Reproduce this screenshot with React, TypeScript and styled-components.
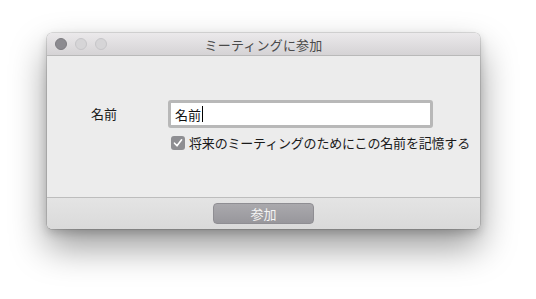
import React from 'react'
import styled, { createGlobalStyle } from 'styled-components'

const GlobalStyle = createGlobalStyle`
  html, body {
    margin: 0;
    padding: 0;
    background: #ffffff;
  }
  body {
    font-family: "Noto Sans CJK JP", "Noto Sans", sans-serif;
    -webkit-font-smoothing: antialiased;
  }
`

const Stage = styled.div`
  width: 536px;
  height: 299px;
  padding: 33px 0 0 47px;
  box-sizing: border-box;
`

const Window = styled.div`
  width: 433px;
  height: 196px;
  display: flex;
  flex-direction: column;
  border-radius: 5px;
  overflow: hidden;
  background: #ececec;
  box-shadow: 0 0 0 0.5px rgba(0, 0, 0, 0.22), 0 18px 36px rgba(0, 0, 0, 0.4), 0 4px 10px rgba(0, 0, 0, 0.18);
`

const TitleBar = styled.div`
  position: relative;
  height: 22px;
  flex: none;
  display: flex;
  align-items: center;
  justify-content: center;
  background: linear-gradient(#ebe9eb, #d5d3d5);
  border-bottom: 1px solid #b9b9b9;
  font-size: 13px;
  color: #4a4a4a;
  letter-spacing: 0.2px;
`

const Lights = styled.div`
  position: absolute;
  left: 8px;
  top: 5px;
  display: flex;
  gap: 8px;
`

const Light = styled.span<{ $active?: boolean }>`
  width: 12px;
  height: 12px;
  border-radius: 50%;
  box-sizing: border-box;
  background: ${(p) => (p.$active ? '#8c8b90' : '#d6d5d7')};
  border: 1px solid ${(p) => (p.$active ? '#7d7c80' : '#c6c5c8')};
`

const Content = styled.div`
  flex: 1;
  padding: 44px 0 0 44px;
  display: grid;
  grid-template-columns: 77px 265px;
  grid-auto-rows: min-content;
  row-gap: 5px;
`

const Label = styled.div`
  font-size: 13px;
  color: #1a1a1a;
  line-height: 28px;
`

const Input = styled.div`
  height: 22px;
  border: 3px solid #b8b8b8;
  border-radius: 3px;
  background: #ffffff;
  display: flex;
  align-items: center;
  padding-left: 4px;
  font-size: 13px;
  color: #111;
`

const Caret = styled.span`
  display: inline-block;
  width: 1px;
  height: 16px;
  background: #000;
  margin-left: 1px;
`

const CheckRow = styled.label`
  grid-column: 2;
  display: flex;
  align-items: center;
  gap: 4px;
  margin-left: 3px;
  font-size: 13px;
  letter-spacing: -0.18px;
  color: #1a1a1a;
  white-space: nowrap;
`

const Box = styled.span`
  flex: none;
  width: 14px;
  height: 14px;
  border-radius: 3px;
  background: #8e8e92;
  display: flex;
  align-items: center;
  justify-content: center;
`

const Footer = styled.div`
  height: 31px;
  flex: none;
  border-top: 1px solid #bdbdbd;
  background: linear-gradient(#e4e4e4, #dadada);
  display: flex;
  justify-content: center;
  align-items: center;
`

const Button = styled.button`
  width: 101px;
  height: 21px;
  margin-bottom: 1px;
  border-radius: 4px;
  border: 1px solid #8f8e93;
  background: linear-gradient(#aaa9ad, #98979c);
  color: #f4f4f4;
  font-family: inherit;
  font-size: 13px;
  padding: 0;
  line-height: 19px;
`

export default function App() {
  return (
    <Stage>
      <GlobalStyle />
      <Window>
        <TitleBar>
          <Lights>
            <Light $active />
            <Light />
            <Light />
          </Lights>
          ミーティングに参加
        </TitleBar>
        <Content>
          <Label>名前</Label>
          <Input>
            名前<Caret />
          </Input>
          <CheckRow>
            <Box>
              <svg width="10" height="10" viewBox="0 0 10 10">
                <path d="M1.5 5.2 L4 7.8 L8.6 1.8" fill="none" stroke="#fff" strokeWidth="1.6" strokeLinecap="round" strokeLinejoin="round" />
              </svg>
            </Box>
            将来のミーティングのためにこの名前を記憶する
          </CheckRow>
        </Content>
        <Footer>
          <Button>参加</Button>
        </Footer>
      </Window>
    </Stage>
  )
}
